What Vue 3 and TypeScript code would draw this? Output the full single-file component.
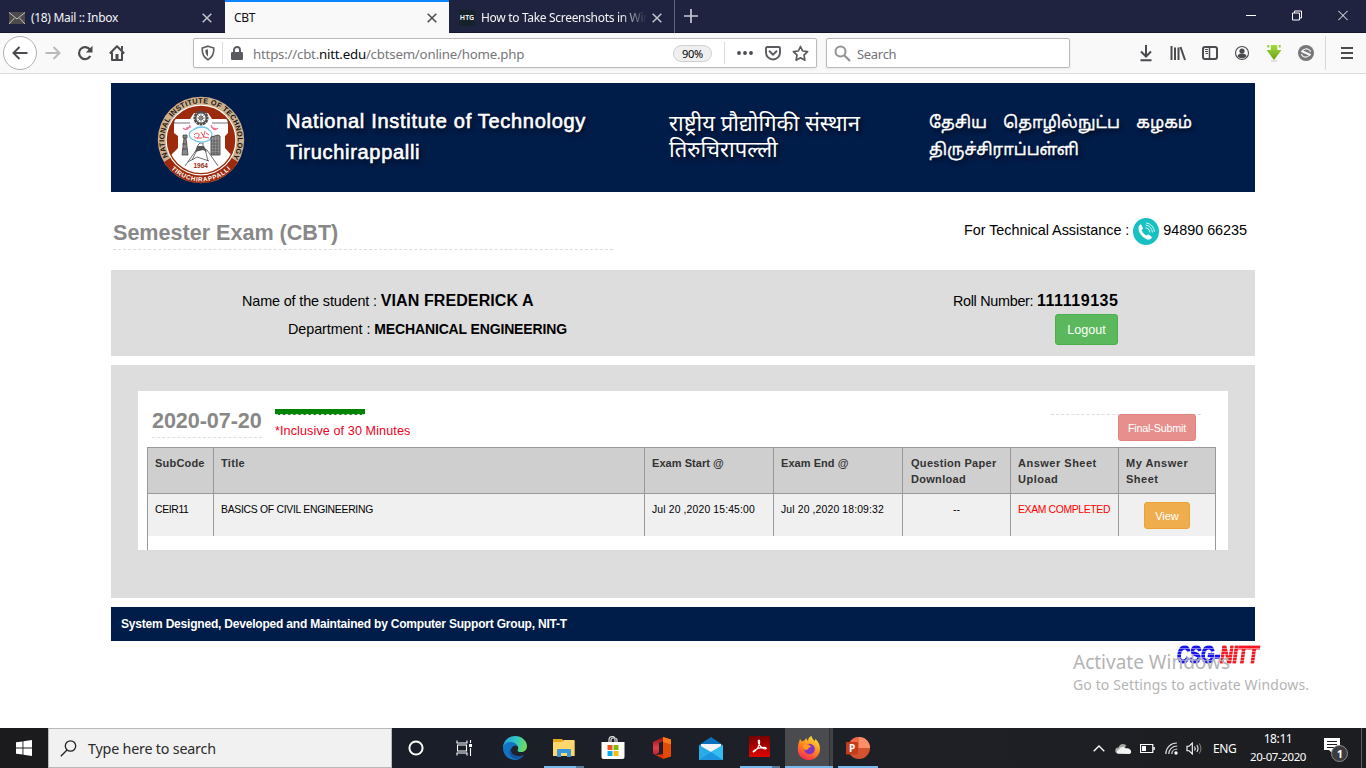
<script setup lang="ts">
interface Column {
  label: string
  value: string
  kind: 'code' | 'title' | 'date' | 'dash' | 'alert' | 'view'
}

const columns: Column[] = [
  { label: 'SubCode', value: 'CEIR11', kind: 'code' },
  { label: 'Title', value: 'BASICS OF CIVIL ENGINEERING', kind: 'title' },
  { label: 'Exam Start @', value: 'Jul 20 ,2020 15:45:00', kind: 'date' },
  { label: 'Exam End @', value: 'Jul 20 ,2020 18:09:32', kind: 'date' },
  { label: 'Question Paper Download', value: '--', kind: 'dash' },
  { label: 'Answer Sheet Upload', value: 'EXAM COMPLETED', kind: 'alert' },
  { label: 'My Answer Sheet', value: 'View', kind: 'view' },
]

const teeth: number[] = Array.from({ length: 12 }, (_, i) => i * 30)
</script>

<template>
  <div class="screen">
    <header class="tabs">
      <div class="tab mail">
        <svg width="16" height="12" viewBox="0 0 16 12"><rect width="16" height="12" fill="#4b4b4b" /><path d="M0 .5 8 7l8-6.500M0 12l5.500-6M16 12l-5.500-6" fill="none" stroke="#c4c4c4" stroke-width="1" /></svg>
        <span class="tab-title t-mail">(18) Mail :: Inbox</span>
        <svg class="x" width="10" height="10" viewBox="0 0 10 10"><path d="M.7.7l8.600 8.600M9.300.7.7 9.300" stroke="#c3c3cc" stroke-width="1.500" /></svg>
      </div>
      <div class="tab active">
        <span class="tab-title">CBT</span>
        <svg class="x" width="10" height="10" viewBox="0 0 10 10"><path d="M.7.7l8.600 8.600M9.300.7.7 9.300" stroke="#4a4a4f" stroke-width="1.500" /></svg>
      </div>
      <div class="tab htg">
        <span class="htg-icon">HTG</span>
        <span class="tab-title fade">How to Take Screenshots in Win</span>
        <svg class="x" width="10" height="10" viewBox="0 0 10 10"><path d="M.7.7l8.600 8.600M9.300.7.7 9.300" stroke="#c3c3cc" stroke-width="1.500" /></svg>
      </div>
      <svg class="plus" width="14" height="14" viewBox="0 0 14 14"><path d="M7 0v14M0 7h14" stroke="#c9c9d2" stroke-width="1.700" /></svg>
      <div class="win">
        <svg width="10" height="11" viewBox="0 0 10 11"><path d="M0 5.500h10" stroke="#fff" /></svg>
        <svg width="10" height="11" viewBox="0 0 10 11"><path d="M.5 3h7v7h-7zM2.500 3V1h7v7h-2" fill="none" stroke="#fff" /></svg>
        <svg width="10" height="11" viewBox="0 0 10 11"><path d="M.3.8l9.400 9.400M9.700.8.3 10.200" stroke="#fff" /></svg>
      </div>
    </header>

    <nav class="toolbar">
      <span class="back"><svg width="16" height="14" viewBox="0 0 16 14"><path d="M15.500 7H1.500M7.500 1l-6 6 6 6" fill="none" stroke="#4a4a4f" stroke-width="2" /></svg></span>
      <svg class="fwd" width="16" height="14" viewBox="0 0 16 14"><path d="M.5 7h14M8.500 1l6 6-6 6" fill="none" stroke="#bababc" stroke-width="2" /></svg>
      <svg class="reload" width="16" height="16" viewBox="0 0 16 16"><path d="M13.300 11A6 6 0 1 1 13 4.700" fill="none" stroke="#4a4a4f" stroke-width="2.200" /><path d="M15.500.8v6.700H8.800z" fill="#4a4a4f" /></svg>
      <svg class="home" width="16" height="16" viewBox="0 0 16 16"><path d="M.8 8.500 8 1.300l7.200 7.200M3 7.500V15h10V7.500" fill="none" stroke="#4a4a4f" stroke-width="2" stroke-linejoin="round" /><path d="M6.500 9h3v5h-3zM12 1h2v5l-2-2z" fill="#4a4a4f" /></svg>
      <div class="url">
        <svg width="14" height="16" viewBox="0 0 14 16"><path d="M7 1.200 12.800 3c.2 5.400-1 9.200-5.800 11.800C2.200 12.200 1 8.400 1.200 3z" fill="none" stroke="#5a5a5f" stroke-width="1.600" /><path d="M7 4.200 4.300 5c.1 3.200.8 5 2.700 6.500z" fill="#5a5a5f" /></svg>
        <i class="sep s1"></i>
        <svg class="lock" width="12" height="14" viewBox="0 0 12 14"><path d="M3 7V4a3 3 0 0 1 6 0v3" fill="none" stroke="#5a5a5f" stroke-width="1.900" /><rect y="6" width="12" height="8" rx="1.200" fill="#5a5a5f" /></svg>
        <span class="address">https://cbt.<b>nitt.edu</b>/cbtsem/online/home.php</span>
        <span class="zoom">90%</span>
        <i class="sep s2"></i>
        <svg class="dots" width="16" height="4" viewBox="0 0 16 4"><g fill="#4a4a4f"><circle cx="2" cy="2" r="1.900" /><circle cx="8" cy="2" r="1.900" /><circle cx="14" cy="2" r="1.900" /></g></svg>
        <svg class="pocket" width="16" height="15" viewBox="0 0 16 15"><path d="M2.300 1h11.400q1.300 0 1.300 1.300V6.500a7 7 0 0 1-14 0V2.300Q1 1 2.300 1z" fill="none" stroke="#5a5a5f" stroke-width="1.900" /><path d="M4.500 5.300 8 8.700l3.500-3.400" fill="none" stroke="#5a5a5f" stroke-width="1.900" stroke-linecap="round" /></svg>
        <svg class="star" width="17" height="17" viewBox="0 0 17 17"><path d="M8.500 1.500 10.600 6l5 .7L12 10.200l.9 5-4.400-2.400-4.400 2.400.9-5L1.400 6.700l5-.7z" fill="none" stroke="#5a5a5f" stroke-width="1.700" stroke-linejoin="round" /></svg>
      </div>
      <div class="search">
        <svg width="17" height="17" viewBox="0 0 17 17"><circle cx="6.500" cy="6.500" r="5" fill="none" stroke="#929292" stroke-width="2" /><path d="m10 10 6 6" stroke="#929292" stroke-width="2.200" /></svg>
        <span>Search</span>
      </div>
      <div class="tools">
        <svg width="16" height="18" viewBox="0 0 16 18"><path d="M8 1v11M3 7.500l5 5 5-5M2.500 16.200h11" fill="none" stroke="#4a4a4f" stroke-width="2" /></svg>
        <svg width="16" height="18" viewBox="0 0 16 18"><path d="M1.500 2v14M5 3.500V16M8.500 3.500V16M10.500 3l4.500 13" stroke="#4a4a4f" stroke-width="2" fill="none" /></svg>
        <svg width="16" height="18" viewBox="0 0 16 18"><rect x="1" y="3" width="14" height="12" rx="2" fill="none" stroke="#4a4a4f" stroke-width="2" /><path d="M7.500 3v12" stroke="#4a4a4f" stroke-width="1.500" /><path d="M3 5.500h3M3 7.500h3M3.500 9.500H6" stroke="#4a4a4f" /></svg>
        <svg width="16" height="18" viewBox="0 0 16 18"><circle cx="8" cy="9" r="6.500" fill="none" stroke="#4a4a4f" stroke-width="1.100" /><circle cx="8" cy="7" r="2.600" fill="#4a4a4f" /><path d="M3.500 12.500c0-2 2-3 4.500-3s4.500 1 4.500 3A6 6 0 0 1 8 14.300a6 6 0 0 1-4.500-1.800z" fill="#4a4a4f" /></svg>
        <svg width="16" height="18" viewBox="0 0 16 18"><defs><linearGradient id="dl" x1="0" y1="0" x2="0" y2="1"><stop offset="0" stop-color="#a5dc3f" /><stop offset="1" stop-color="#6a9f12" /></linearGradient></defs><path d="M4.800 1h6.400v5H15.500L8 16 .5 6h4.300z" fill="url(#dl)" /><path d="M2.300 1v2.500M13.700 1v2.500" stroke="#94cf3a" stroke-width="2" /><path d="M5 17h6" stroke="#c9c9c9" /></svg>
        <svg width="16" height="18" viewBox="0 0 16 18"><circle cx="8" cy="9" r="8" fill="#77777a" /><path d="M4 7.800C5 4.500 9.500 4 11.800 6.300L12.500 8M12 10.200C11 13.500 6.500 14 4.200 11.700L3.500 10" fill="none" stroke="#f9f9fa" stroke-width="1.100" /><path d="M3.500 7 12.500 11" stroke="#f9f9fa" stroke-width="2" /></svg>
      </div>
      <i class="menu-sep"></i>
      <svg class="menu" width="12" height="12" viewBox="0 0 12 12"><path d="M0 1h12M0 6h12M0 11h12" stroke="#4a4a4f" stroke-width="1.800" /></svg>
    </nav>

    <main class="page">
      <section class="banner">
        <svg class="logo" width="88" height="88" viewBox="0 0 88 88">
          <defs>
            <path id="arcTop" d="M11.700 61.400A36.700 36.700 0 1 1 76.300 61.400" />
            <path id="arcBottom" d="M12.200 70.700A41.500 41.500 0 0 0 75.800 70.700" />
            <clipPath id="disc"><circle cx="44" cy="44" r="33" /></clipPath>
          </defs>
          <circle cx="44" cy="44" r="43.200" fill="#cdae8b" />
          <path d="M7 66A43 43 0 0 0 81 66L70 59a30 30 0 0 1-52 0z" fill="#9e2a0d" />
          <circle cx="44" cy="44" r="35.500" fill="#fff" />
          <circle cx="44" cy="44" r="34.300" fill="#9e2a0d" />
          <path clip-path="url(#disc)" d="M17 23h16l4-6h14l4 6h16v14l-3 3v12l10 11-14 15H24L10 63l11-11V40l-4-3z" fill="#fff" />
          <g fill="none" stroke="#333" stroke-width=".7"><path d="M17 23v4h16M71 23v4H55" /><path d="M28 70l12-17 1-4 2-2h3v5l4 2 11 16M35 64l5-10M51 65l-3-12M31 66l9-5 12 4" /></g>
          <path d="m38 56 2-6h7l3 6-4-2z" fill="#555" />
          <g transform="translate(44 22)">
            <rect v-for="a in teeth" :key="a" x="-1.400" y="-7.500" width="2.800" height="3" fill="#4c4c4c" :transform="`rotate(${a})`" />
            <circle r="5.300" fill="#fff" stroke="#555" stroke-width="1.500" /><circle r="2" fill="none" stroke="#555" />
            <path d="M-5 0H5M0-5V5M-4-4l8 8M4-4l-8 8" stroke="#666" stroke-width=".6" />
          </g>
          <path d="M26 32c3 3 6 1 7-3M54 29c1 4 4 6 7 3M29 32l5-1M54 31l5 2" fill="none" stroke="#f26a94" stroke-width="1.200" />
          <path d="M36 34c5-4 13-4 16 0 5 3 3 10-2 11-4 2-10 1-13-1-6-2-6-8-1-10z" fill="#fff" stroke="#78c5ea" stroke-width="1.300" />
          <path d="M37 39c2-3 6-2 5 1-2 4-6 1-4 0M40 42h5M44 36l3 5 5 1M48 35l-2 7M49 37l3 2" fill="none" stroke="#e2434b" stroke-width=".9" />
          <path d="M26 39h4v3h-4zM27 42l-2 17h6l-2-17M25 48h5M25 53h5" stroke="#444" fill="#888" stroke-width=".8" />
          <path d="M54 41l7-2 2 1v19h-9z" fill="#999" stroke="#333" stroke-width=".8" /><path d="M54 45h8M54 48h8M54 51h8M54 54h8M54 57h8M57 40v19M60 39v20" stroke="#444" stroke-width=".6" />
          <text x="36.500" y="72" class="year">1964</text>
          <text class="ring dark"><textPath href="#arcTop" textLength="151" startOffset="1">NATIONAL INSTITUTE OF TECHNOLOGY</textPath></text>
          <text class="ring light"><textPath href="#arcBottom" textLength="66" startOffset="3">TIRUCHIRAPPALLI</textPath></text>
        </svg>
        <div class="name en"><span>National Institute of Technology</span><br /><span class="l2">Tiruchirappalli</span></div>
        <div class="name hi">राष्ट्रीय प्रौद्योगिकी संस्थान<br />तिरुचिरापल्ली</div>
        <div class="name ta"><span class="ta1">தேசிய தொழில்நுட்ப கழகம்</span><br /><span>திருச்சிராப்பள்ளி</span></div>
      </section>

      <section class="headline">
        <h1>Semester Exam (CBT)</h1>
        <div class="assist">
          <span>For Technical Assistance :</span>
          <svg width="26" height="27" viewBox="0 0 26 27"><ellipse cx="13" cy="13.500" rx="13" ry="13.500" fill="#16c1c2" /><path d="M5.500 10c-.2 3 1.500 6 4 8.500 2.700 2.500 5 3.500 7 3 1.500-.4 2.500-1.800 2.300-2.500l-3-2.500c-.8-.5-1.800 1-2.600.8-1.500-.4-4.200-3.500-4.500-5-.1-.9 1.500-1.300 1.200-2.400L8.300 6.700C7 6.200 5.600 8 5.500 10z" fill="#fff" /><path d="M12.500 9.500q4 .5 4.500 5M12.500 7q6 .8 7 7.500M13 4.800q7.500 1.500 8.500 9" fill="none" stroke="#d9f6f6" stroke-width="1" /></svg>
          <span>94890 66235</span>
        </div>
      </section>

      <section class="student">
        <div class="info">
          <p class="who">Name of the student : <b>VIAN FREDERICK A</b></p>
          <p class="dept">Department : <b>MECHANICAL ENGINEERING</b></p>
        </div>
        <div class="roll">
          <p>Roll Number: <b>111119135</b></p>
          <button class="btn green">Logout</button>
        </div>
      </section>

      <section class="exam">
        <div class="card">
          <div class="card-head">
            <h2>2020-07-20</h2>
            <div class="note"><div class="bar"></div><span>*Inclusive of 30 Minutes</span></div>
            <div class="submit"><button class="btn red">Final-Submit</button></div>
          </div>
          <table>
            <colgroup><col class="c0" /><col class="c1" /><col class="c2" /><col class="c3" /><col class="c4" /><col class="c5" /><col class="c6" /></colgroup>
            <thead><tr><th v-for="c in columns" :key="c.label" :class="`h-${c.kind}`">{{ c.label }}</th></tr></thead>
            <tbody>
              <tr>
                <td v-for="c in columns" :key="c.label" :class="c.kind">
                  <button v-if="c.kind === 'view'" class="btn orange">{{ c.value }}</button>
                  <span v-else>{{ c.value }}</span>
                </td>
              </tr>
            </tbody>
          </table>
          <div class="tail"></div>
        </div>
      </section>

      <footer class="foot">System Designed, Developed and Maintained by Computer Support Group, NIT-T</footer>
      <div class="csg"><span class="blue">CSG-</span><span class="redt">NITT</span></div>
    </main>

    <aside class="watermark"><div class="w1">Activate Windows</div><div class="w2">Go to Settings to activate Windows.</div></aside>

    <div class="taskbar">
      <div class="start"><svg width="16" height="16" viewBox="0 0 16 16"><path d="M0 2.300 6.500 1.400v6.100H0zM7.400 1.200 16 0v7.500H7.400zM0 8.400h6.500v6.200L0 13.700zM7.400 8.400H16V16l-8.600-1.200z" fill="#fff" /></svg></div>
      <div class="find">
        <svg width="17" height="17" viewBox="0 0 17 17"><circle cx="10.500" cy="6" r="5.200" fill="none" stroke="#222" stroke-width="1.300" /><path d="M7 10 .8 16.200" stroke="#222" stroke-width="1.300" /></svg>
        <span>Type here to search</span>
      </div>
      <div class="cell small"><svg width="16" height="16" viewBox="0 0 16 16"><circle cx="8" cy="8" r="6.600" fill="none" stroke="#fff" stroke-width="2" /></svg></div>
      <div class="cell small view-icon"><svg width="17" height="16" viewBox="0 0 17 16"><path d="M1 .5v2.500h10V.5M1 15.500V13h10v2.500M1.500 5h9v6h-9zM14.500 0v3M14.500 8v8" fill="none" stroke="#fff" stroke-width="1.100" /><path d="M13 4h3v3h-3z" fill="#fff" /></svg></div>
      <div class="apps">
        <div class="cell">
          <svg width="24" height="24" viewBox="0 0 24 24"><defs><linearGradient id="e1" x1="0" y1=".3" x2="1" y2=".5"><stop offset="0" stop-color="#1fa2df" /><stop offset=".55" stop-color="#36c8c0" /><stop offset="1" stop-color="#70dd55" /></linearGradient></defs><path d="M0 11C1 3.500 6.500 0 12 0c7 0 12 5 12 10 0 4-3 6-6 6-3.500 0-5-1.500-3.500-3C16 9 12 7 8 7c-4 0-7 2-8 5z" fill="url(#e1)" /><path d="M0 12c1-4 4-6 7-6 4 0 7 2 7.500 5-3-2-6.500 0-6.500 3.500C8 19 14 22 21 19c-2 3-5.500 5-9 5C5 24 0 18.500 0 12z" fill="#1274c4" /><path d="M8.200 12c-1.800 6 5 10 12.800 7-2.500 3-6 4.500-8 4C6 22 5 15 8.200 12z" fill="#17529b" /><path d="M9.500 11c-1.500 1.800-1.400 4.300.5 6.200 2 2 5.500 3 9 1.300l4-2.500c-3 1.500-8 1-8.500-1.500-.3-1 1-1 .7-2.500C14.700 9.500 11 9 9.500 11z" fill="#20232c" /></svg>
        </div>
        <div class="cell run">
          <svg width="22" height="18" viewBox="0 0 22 18"><path d="M0 0h9l2 2h10.500v15H0z" fill="#e7a91b" /><path d="M0 3h9l2-2h10.500v16H0z" fill="#ffd76d" /><path d="M4 18v-7q0-1 1-1h12q1 0 1 1v7h-4v-4H8v4z" fill="#3c96db" /></svg>
          <i class="line split"></i>
        </div>
        <div class="cell">
          <svg width="24" height="24" viewBox="0 0 24 24"><path d="M8 7V4q0-3.300 3-3.300h1Q14 .7 14 4v3M10 6V4q0-2 3-2t3 2v3" fill="none" stroke="#ddd" stroke-width="1.200" /><path d="M.5 6h23v15q0 2-2 2h-19q-2 0-2-2z" fill="#fff" /><path d="M6.500 9h5v5h-5z" fill="#f1511b" /><path d="M12.500 9h5v5h-5z" fill="#80bc06" /><path d="M6.500 15h5v5h-5z" fill="#00adef" /><path d="M12.500 15h5v5h-5z" fill="#fbbc09" /></svg>
        </div>
        <div class="cell">
          <svg width="20" height="22" viewBox="0 0 20 22"><defs><linearGradient id="o1" x1="0" y1="0" x2="0" y2="1"><stop offset="0" stop-color="#8e1010" /><stop offset=".6" stop-color="#e0404b" /><stop offset="1" stop-color="#bb1f37" /></linearGradient></defs><path d="M1 5 11 0v4L7 6v9.500L3.500 18 1 16.500z" fill="url(#o1)" /><path d="m11 0 8 2.500v17L11 22z" fill="#e74907" /><path d="m11 0 8 2.500v5L11 5z" fill="#fa7a17" /><path d="m3.500 18 8-1v5z" fill="#d9330d" /></svg>
        </div>
        <div class="cell">
          <svg width="24" height="23" viewBox="0 0 24 23"><path d="M0 8 12 0l12 8v15H0z" fill="#0870bd" /><path d="M2 7h20v9H2z" fill="#f2f5f8" /><path d="M0 8l12 7 12-7v15H0z" fill="#29abe8" /><path d="M0 23 12 15 24 8v15z" fill="#35bcf1" /><path d="m12 15 12 8H0z" fill="#1c94df" /></svg>
        </div>
        <div class="cell run">
          <svg class="up" width="21" height="21" viewBox="0 0 21 21"><defs><linearGradient id="a1" x1="0" y1="0" x2="0" y2="1"><stop offset="0" stop-color="#760000" /><stop offset="1" stop-color="#df0500" /></linearGradient></defs><rect width="21" height="21" fill="url(#a1)" /><path d="M4.500 16c3-1.500 7-7.500 6-11.300-.2-.8-1.400-.7-1.400.3 0 4 4.400 8 7.400 8 1.500 0 1-1.600-1-1.600-3 0-7.500 1-10 2.700-1.800 1.200-1.700 2-.8 1.900z" fill="none" stroke="#fff" stroke-width="1.100" /></svg>
          <i class="line split"></i>
        </div>
        <div class="cell focus">
          <svg width="24" height="24" viewBox="0 0 24 24"><defs><linearGradient id="f1" x1=".8" y1="0" x2=".3" y2="1"><stop offset="0" stop-color="#ffe63d" /><stop offset=".5" stop-color="#ff8a1c" /><stop offset="1" stop-color="#f92850" /></linearGradient></defs><path d="M2 6l1-3 2 2.500L8 4l1-2 2 3c0-3 2-4.500 3.500-5 .5 3 2 3.500 3 5l1-2c3 3 4.800 6 4.500 10A11 11 0 0 1 12 24C5 24 .5 19 .8 13 .9 10 1.200 8 2 6z" fill="url(#f1)" /><circle cx="12.500" cy="13" r="5.300" fill="#8133c2" /><path d="M6 10c3-2.500 6-2 7 0 2 .2 1.500 1-1.500 2-.5 2-2.500 2.500-4 1.500z" fill="#ff9c19" /></svg>
          <i class="line"></i>
        </div>
        <div class="cell run">
          <svg width="24" height="22" viewBox="0 0 24 22"><path d="M13 0a11 11 0 1 0 0 22 11 11 0 0 0 0-22z" fill="#d35230" /><path d="M13 0v11h11A11 11 0 0 0 13 0z" fill="#ff8f6b" /><path d="M13 0v11H2A11 11 0 0 1 13 0z" fill="#ed6c47" /><rect y="5" width="12" height="12.500" rx="1" fill="#c43e1c" /><text x="3" y="15" class="ppt">P</text></svg>
          <i class="line"></i>
        </div>
      </div>
      <div class="tray">
        <svg width="12" height="7" viewBox="0 0 12 7"><path d="m.7 6.300 5.300-5.300 5.300 5.300" fill="none" stroke="#fff" stroke-width="1.300" /></svg>
        <svg class="g1" width="17" height="11" viewBox="0 0 17 11"><path d="M3 10.500a3 3 0 0 1 .5-6C5 0 10 0 11.500 3l-7 4z" fill="#aaa" /><path d="M3 10.800C1 9.500 2 7 4 6.500c2-3 5-3 7-1 3-1 6 2 5 4.500l-1.500 1z" fill="#f3f3f3" /></svg>
        <svg class="g2" width="15" height="9" viewBox="0 0 15 9"><path d="M.5.5h12.300v8H.500zM14.200 3v3" fill="none" stroke="#fff" stroke-width="1.200" /><path d="M2 2h4v5H2z" fill="#fff" /></svg>
        <svg class="g3" width="13" height="13" viewBox="0 0 13 13"><path d="M.8 12C1 5.500 5.500 1 12 1M3.800 12c0-4.500 3.500-8 8.500-8M6.800 12c0-3 2.500-5 5.500-5" fill="none" stroke="#ddd" stroke-width="1.200" /><circle cx="11" cy="11" r="1.700" fill="#fff" /></svg>
        <svg class="g4" width="17" height="13" viewBox="0 0 17 13"><path d="M1 4.300h2L6.300 1v11L3 8.700H1z" fill="none" stroke="#fff" stroke-width="1.100" /><path d="M8.500 4.500q1.500 2 0 4M10.800 3q2.500 3.500 0 7" fill="none" stroke="#eee" stroke-width="1.100" /><path d="M13.200 1.500q3.500 5 0 10" fill="none" stroke="#777" stroke-width="1.100" /></svg>
        <span class="lang">ENG</span>
        <div class="clock"><div class="time">18:11</div><div class="date-text">20-07-2020</div></div>
        <svg class="bell" width="25" height="26" viewBox="0 0 25 26"><path d="M0 1h16v12h-7v4l-4-4H0z" fill="#fff" /><path d="M3 4.500h10M3 7.500h10M3 10.500h7" stroke="#1c1d20" stroke-width="1.200" /><circle cx="15.500" cy="16.500" r="8" fill="#3b3b3e" stroke="#8b8b8d" stroke-width="1" /><text x="12.700" y="20.500" class="badge">1</text></svg>
        <i class="peek"></i>
      </div>
    </div>
  </div>
</template>

<style>
html, body { margin: 0; overflow: hidden; background: #fff; }
</style>

<style scoped>
* { box-sizing: border-box; }
.screen { position: relative; width: 1366px; height: 768px; display: flex; flex-direction: column; background: #fff; font-family: "Liberation Sans", Arial, sans-serif; color: #000; overflow: hidden; }
svg { display: block; flex: none; }
p, h1, h2 { margin: 0; }
span { white-space: nowrap; }
.tabs, .toolbar, .watermark, .taskbar { font-family: "Noto Sans", "Open Sans", sans-serif; }

.tabs { height: 33px; flex: none; background: #202340; border-bottom: 1px solid #14162c; display: flex; }
.tab { height: 33px; display: flex; align-items: center; padding: 2px 12px 0 9px; color: #f4f4f6; font-size: 12px; }
.tab .x { margin-left: auto; }
.tab-title { letter-spacing: -0.32px; }
.mail { width: 225px; padding-right: 13px; }
.t-mail { margin-left: 6px; }
.active { width: 224px; background: #f9f9fa; color: #111; border-top: 2px solid #0a84ff; padding: 0 12px 0 9px; }
.htg { width: 226px; padding-left: 10px; border-right: 1px solid #63657a; }
.htg-icon { width: 16px; height: 16px; background: #15222b; color: #fff; font: 600 7px/16px "Noto Sans", sans-serif; letter-spacing: .1px; text-align: center; }
.fade { width: 166px; margin-left: 6px; -webkit-mask-image: linear-gradient(90deg, #000 84%, transparent); mask-image: linear-gradient(90deg, #000 84%, transparent); }
.plus { margin: 9px 0 0 9px; }
.win { margin-left: auto; display: flex; gap: 36px; padding: 10px 18px 0 0; }

.toolbar { height: 41px; flex: none; background: #f9f9fa; border-bottom: 1px solid #dedee0; display: flex; align-items: center; padding-left: 3px; }
.back { width: 34px; height: 34px; border-radius: 50%; border: 1px solid #b1b1b3; background: #fff; display: grid; place-items: center; }
.fwd { margin-left: 8px; }
.reload { margin-left: 16px; }
.home { margin-left: 16px; }
.url { margin-left: 68px; width: 624px; height: 30px; border: 1px solid #bbbbbd; border-radius: 2px; background: #fff; display: flex; align-items: center; padding-left: 7px; box-shadow: 0 1px 3px #0001; }
.sep { width: 1px; height: 22px; background: #dcdcdd; }
.s1 { margin-left: 7px; }
.lock { margin-left: 8px; }
.address { margin-left: 10px; margin-top: 2px; width: 420px; font-size: 13.300px; letter-spacing: -.23px; color: #77777b; }
.address b { font-weight: 400; color: #0c0c0d; }
.zoom { width: 39px; height: 17px; border: 1px solid #cfcfd1; border-radius: 9px; background: #efeff0; font-size: 11px; line-height: 15px; letter-spacing: -.2px; text-align: center; }
.s2 { margin-left: 12px; }
.dots { margin-left: 12px; }
.pocket { margin-left: 12px; }
.star { margin-left: 11px; }
.search { margin-left: 9px; width: 244px; height: 30px; border: 1px solid #bbbbbd; border-radius: 2px; background: #fff; display: flex; align-items: center; padding-left: 7px; box-shadow: 0 1px 3px #0001; color: #737377; font-size: 13px; }
.search span { margin: 2px 0 0 6px; letter-spacing: -.3px; }
.tools { margin-left: 68px; display: flex; gap: 16px; }
.menu-sep { width: 1px; height: 34px; margin-left: 11px; background: #d7d7db; }
.menu { margin-left: 15px; }

.page { width: 1144px; margin: 9px auto 0; flex: 1; }
.banner { height: 109px; background: #001c48; color: #fff; display: flex; text-shadow: 2px 3px 4px #0009; }
.logo { margin: 13px 0 0 46px; }
.ring { font: bold 7.300px "Liberation Sans", sans-serif; text-shadow: none; }
.dark { fill: #191410; }
.light { fill: #fff; font-size: 6.300px; }
.year { font: bold 6.500px "Liberation Sans", sans-serif; fill: #9e2a0d; text-shadow: none; }
.en { margin: 23px 0 0 41px; width: 383px; font-size: 20px; line-height: 31px; letter-spacing: .7px; -webkit-text-stroke: .6px #fff; }
.hi { margin-top: 30px; width: 260px; font: 22px/26px "Noto Sans Devanagari", "Noto Sans", sans-serif; }
.ta { margin-top: 28px; font: 16.600px/27px "Noto Sans Tamil", "Noto Sans", sans-serif; -webkit-text-stroke: .35px #fff; }
.ta1 { word-spacing: 12px; }

.headline { height: 78px; display: flex; justify-content: space-between; padding: 0 8px 0 2px; }
h1 { margin-top: 25px; width: 500px; height: 33px; border-bottom: 1px dashed #ddd; font-size: 21.600px; line-height: 32px; letter-spacing: -.02px; color: #888; }
.assist { display: flex; height: 27px; margin-top: 26px; gap: 4px; font-size: 14.400px; line-height: 25px; letter-spacing: -.03px; }

.student { height: 86px; background: #ddd; display: flex; justify-content: space-between; padding: 16px 137px 0 131px; font-size: 14.400px; }
.student p { height: 29px; line-height: 29px; white-space: nowrap; letter-spacing: -.13px; }
.student .dept { padding-left: 46px; letter-spacing: -.07px; }
.dept b { font-size: 14px; letter-spacing: -.14px; }
.who b { font-size: 16px; letter-spacing: .1px; }
.student .roll p { letter-spacing: -.3px; }
.student .roll b { font-size: 16px; letter-spacing: .55px; margin-right: -.5px; }
.roll { display: flex; flex-direction: column; align-items: flex-end; }
.btn { display: block; font-family: inherit; color: #fff; padding: 0; border-radius: 3px; text-align: center; flex: none; }
.green { width: 63px; height: 31px; margin-top: -1px; background: #5cb85c; border: 1px solid #4cae4c; font-size: 12.600px; }

.exam { height: 233px; margin-top: 9px; background: #ddd; padding: 26px 27px 0; }
.card { height: 159px; background: #fff; padding: 0 12px 0 9px; overflow: hidden; }
.card-head { height: 56px; display: flex; padding-left: 5px; }
h2 { margin-top: 13px; height: 34px; width: 110px; font-size: 21.600px; line-height: 34px; letter-spacing: -.08px; color: #888; border-bottom: 1px dashed #ddd; white-space: nowrap; }
.note { margin: 18px 0 0 13px; font-size: 12.600px; }
.bar { width: 90px; height: 6px; background: #008400; border-bottom: 1px dashed #ddd; margin-bottom: 8px; }
.note span { display: block; line-height: 16px; color: #f0001c; letter-spacing: .1px; }
.submit { margin: 23px 15px 0 auto; width: 150px; height: 28px; border-top: 1px dashed #ddd; }
.red { width: 78px; height: 27px; margin: -1px 0 0 67px; background: #e78f8d; border: 1px solid #e18380; font-size: 10.800px; letter-spacing: -.2px; }
table { width: 1069px; border-collapse: collapse; table-layout: fixed; }
.c0 { width: 66px; } .c1 { width: 431px; } .c2 { width: 129px; } .c3 { width: 129px; } .c4 { width: 108px; } .c5 { width: 108px; } .c6 { width: 97px; }
th, td { border: 1px solid #999; padding: 8px 0 0 7px; text-align: left; vertical-align: top; line-height: 16px; }
th { height: 46px; padding-top: 7px; background: #cfcfcf; color: #333; font-size: 11px; letter-spacing: .3px; }
.h-code { letter-spacing: .2px; }
.h-date { letter-spacing: .05px; }
.h-dash { padding-left: 8px; }
.h-alert, .h-view { letter-spacing: .5px; }
td { height: 42px; background: #f0f0f0; font-size: 10.400px; border-bottom: 0; }
.code { letter-spacing: -.35px; }
.title { letter-spacing: -.28px; }
.date { letter-spacing: .14px; }
td.dash { text-align: center; padding: 8px 0 0; }
td.alert { color: #f00; letter-spacing: -.35px; }
.orange { width: 46px; height: 27px; margin-left: 18px; background: #f0ad4e; border: 1px solid #eea236; font-size: 11px; }
.tail { height: 16px; border: solid #999; border-width: 0 1px; }
.foot { height: 34px; margin-top: 9px; background: #001c48; color: #fff; font-size: 12px; font-weight: 700; line-height: 34px; letter-spacing: -.2px; padding-left: 10px; white-space: nowrap; }
.csg { margin: 2px 0 0 1066px; width: 120px; height: 23px; font: italic bold 24px/23px "Liberation Sans", sans-serif; white-space: nowrap; transform: scaleX(.72); transform-origin: left; -webkit-mask-image: repeating-linear-gradient(#000 0 2px, #0008 2px 3px); mask-image: repeating-linear-gradient(#000 0 2px, #0008 2px 3px); }
.blue { color: #1412ee; -webkit-text-stroke: 1.500px #1412ee; }
.redt { color: #f41720; -webkit-text-stroke: 1.500px #f41720; }

.watermark { position: absolute; left: 1073px; top: 650px; color: #b4b4b4; }
.w1 { font-size: 19px; line-height: 25px; white-space: nowrap; }
.w2 { font-size: 14px; line-height: 20px; letter-spacing: .12px; white-space: nowrap; }

.taskbar { height: 40px; flex: none; background: linear-gradient(90deg, #1b1b1d 0, #1b1b1d 48px, #1a1e29 392px, #1e2026 900px, #1c1d20); display: flex; color: #fff; }
.start { width: 48px; display: grid; place-items: center; }
.find { width: 344px; border: 1px solid #b8b8b8; background: #f1f1f1; color: #2b2b2b; display: flex; align-items: center; padding-left: 11px; font-size: 14.300px; letter-spacing: -.2px; }
.find span { margin-left: 11px; }
.cell { position: relative; width: 49px; height: 40px; display: grid; place-items: center; }
.small { width: 48px; }
.apps { display: flex; margin-left: 2px; }
.up { margin-top: -3px; }
.line { position: absolute; left: 5px; bottom: 0; width: 40px; height: 2px; background: #76b9ed; }
.split { background: linear-gradient(90deg, #76b9ed 32px, #567c9c 32px); }
.focus { background: linear-gradient(90deg, transparent 1px, #4a4b4e 1px 45px, #303135 45px 46px, #414246 46px); }
.focus .line { left: 1px; width: 48px; }
.ppt { font: bold 10px "Noto Sans", sans-serif; fill: #fff; }
.tray { margin-left: auto; display: flex; align-items: center; }
.g1 { margin-left: 10px; } .g2 { margin-left: 8px; } .g3 { margin-left: 10px; } .g4 { margin-left: 8px; }
.lang { margin-left: 10px; width: 26px; font-size: 12px; letter-spacing: -.4px; }
.clock { width: 80px; font-size: 12px; line-height: 18px; text-align: center; letter-spacing: -.4px; margin-left: -1px; }
.date-text { font-size: 11.500px; }
.bell { margin: 3px 0 0 6px; }
.badge { font: bold 11px "Noto Sans", sans-serif; fill: #fff; }
.peek { width: 1px; height: 40px; margin: 0 4px 0 12px; background: #5c5d60; }
</style>
